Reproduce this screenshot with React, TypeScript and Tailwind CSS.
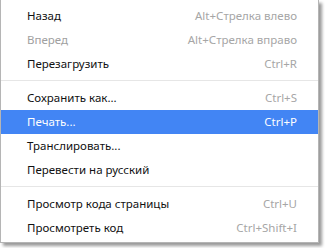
const items = [
    [
        { label: "Назад", shortcut: "Alt+Стрелка влево" },
        { label: "Вперед", shortcut: "Alt+Стрелка вправо", disabled: true },
        { label: "Перезагрузить", shortcut: "Ctrl+R" },
    ],
    [
        { label: "Сохранить как...", shortcut: "Ctrl+S" },
        { label: "Печать...", shortcut: "Ctrl+P", active: true },
        { label: "Транслировать..." },
        { label: "Перевести на русский" },
    ],
    [
        { label: "Просмотр кода страницы", shortcut: "Ctrl+U" },
        { label: "Просмотреть код", shortcut: "Ctrl+Shift+I" },
    ],
]

type Item = {
    label: string
    shortcut?: string
    disabled?: boolean
    active?: boolean
}

function Row({ item }: { item: Item }) {
    return (
        <div
            className={
                item.active
                    ? "flex h-6 items-center justify-between bg-[#4285f4] pl-[26px] pr-[21px] text-white"
                    : "flex h-6 items-center justify-between pl-[26px] pr-[21px]"
            }
        >
            <span className={item.disabled ? "text-[#a0a0a0]" : item.active ? "" : "text-[#111]"}>
                {item.label}
            </span>
            {item.shortcut && (
                <span className={item.active ? "" : "text-[#a6a6a6]"}>{item.shortcut}</span>
            )}
        </div>
    )
}

export default function App() {
    return (
        <div className="h-[248px] w-[325px] bg-white font-['Noto_Sans',sans-serif] text-[11.5px]">
            <div className="w-[319px] border-x border-b border-[#b5b5b5] bg-white pb-[2px] pt-1 shadow-[3px_3px_3px_rgba(0,0,0,0.4)]">
                {items.map((group, i) => (
                    <div key={i}>
                        {i > 0 && (
                            <div className="pb-[5px] pt-1">
                                <div className="h-px bg-[#e6e6e6]" />
                            </div>
                        )}
                        {group.map((item) => (
                            <Row key={item.label} item={item} />
                        ))}
                    </div>
                ))}
            </div>
        </div>
    )
}
